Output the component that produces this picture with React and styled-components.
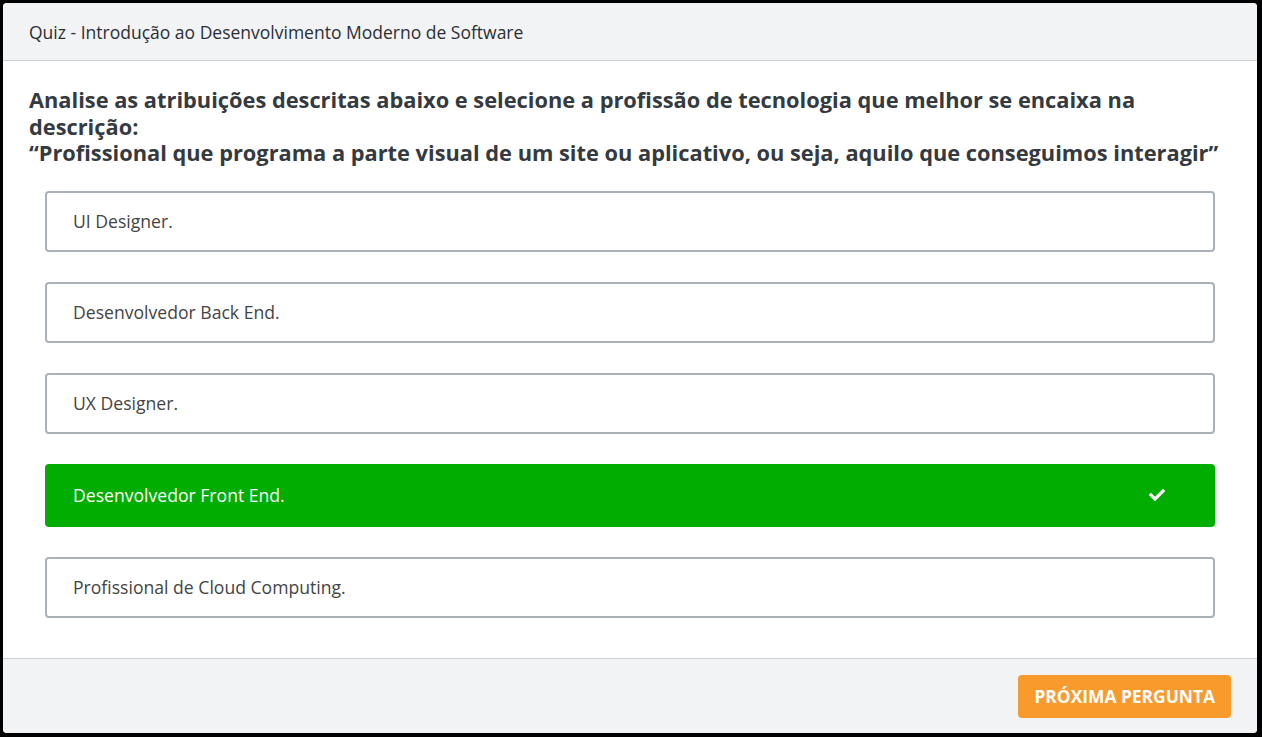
import React, { useState } from 'react';
import styled, { createGlobalStyle } from 'styled-components';
import { FaCheck } from 'react-icons/fa';

const GlobalStyle = createGlobalStyle`
  html, body {
    margin: 0;
    padding: 0;
    background: #000;
    font-family: "Open Sans", "Noto Sans", sans-serif;
  }
  * { box-sizing: border-box; }
`;

const Page = styled.div`
  width: 1262px;
  height: 737px;
  padding: 3px 5px 4px 3px;
`;

const Card = styled.div`
  height: 100%;
  background: #fff;
  border-radius: 4px;
  overflow: hidden;
  display: flex;
  flex-direction: column;
`;

const Header = styled.div`
  height: 58px;
  flex-shrink: 0;
  background: #f2f3f5;
  border-bottom: 1px solid #ccd0d5;
  display: flex;
  align-items: center;
  padding: 0 26px;
  font-size: 17.5px;
  color: #2b2f33;
`;

const Body = styled.div`
  flex: 1;
  padding: 26px 26px 0;
`;

const Question = styled.h2`
  margin: 0 0 24px;
  font-size: 21.8px;
  font-weight: 700;
  line-height: 26.5px;
  color: #343a40;
`;

const Options = styled.div`
  display: flex;
  flex-direction: column;
  gap: 30px;
  padding: 0 16px;
`;

const Option = styled.button`
  display: flex;
  align-items: center;
  justify-content: space-between;
  width: 100%;
  height: ${(p) => (p.$correct ? '63px' : '61px')};
  padding: 0 50px 0 ${(p) => (p.$correct ? '28px' : '26px')};
  border: ${(p) => (p.$correct ? 'none' : '2px solid #aab1b9')};
  border-radius: 4px;
  background: ${(p) => (p.$correct ? '#00ad00' : '#fff')};
  color: ${(p) => (p.$correct ? '#fff' : '#444')};
  font-family: inherit;
  font-size: 17.6px;
  font-weight: ${(p) => (p.$correct ? 500 : 400)};
  text-align: left;
  cursor: pointer;
`;

const Check = styled(FaCheck)`
  font-size: 16px;
  color: #fff;
`;

const Footer = styled.div`
  height: 75px;
  flex-shrink: 0;
  background: #f2f3f5;
  border-top: 1px solid #ccd0d5;
  display: flex;
  align-items: center;
  justify-content: flex-end;
  padding: 0 26px;
`;

const NextButton = styled.button`
  height: 43px;
  padding: 0 16px;
  border: none;
  border-radius: 4px;
  background: #f99a2c;
  color: #fff;
  font-family: inherit;
  font-size: 17.4px;
  font-weight: 700;
  text-transform: uppercase;
  cursor: pointer;
`;

const answers = [
  'UI Designer.',
  'Desenvolvedor Back End.',
  'UX Designer.',
  'Desenvolvedor Front End.',
  'Profissional de Cloud Computing.',
];

export default function App() {
  const [selected, setSelected] = useState(3);

  return (
    <>
      <GlobalStyle />
      <Page>
        <Card>
          <Header>Quiz - Introdução ao Desenvolvimento Moderno de Software</Header>
          <Body>
            <Question>
              Analise as atribuições descritas abaixo e selecione a profissão de tecnologia que melhor se encaixa na descrição:
              <br />
              “Profissional que programa a parte visual de um site ou aplicativo, ou seja, aquilo que conseguimos interagir”
            </Question>
            <Options>
              {answers.map((a, i) => (
                <Option key={a} $correct={i === selected} onClick={() => setSelected(i)}>
                  <span>{a}</span>
                  {i === selected && <Check />}
                </Option>
              ))}
            </Options>
          </Body>
          <Footer>
            <NextButton>Próxima pergunta</NextButton>
          </Footer>
        </Card>
      </Page>
    </>
  );
}
